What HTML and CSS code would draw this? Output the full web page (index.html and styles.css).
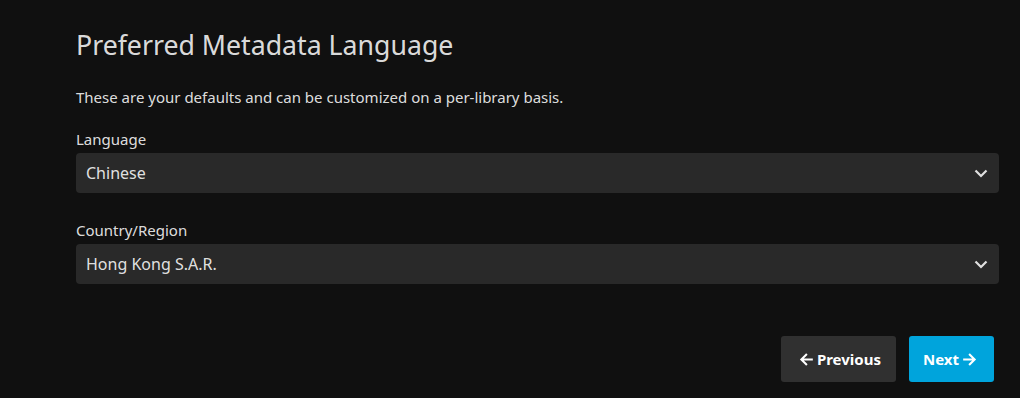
FILE: index.html
```html
<!DOCTYPE html>
<html lang="en">
<head>
  <meta charset="UTF-8">
  <title>Preferred Metadata Language</title>
  <link rel="stylesheet" href="styles.css">
</head>
<body>

<div class="wizard">
  <h1>Preferred Metadata Language</h1>
  <p class="help">These are your defaults and can be customized on a per-library basis.</p>

  <div class="field">
    <label class="field-label">Language</label>
    <div class="select-box">
      <span>Chinese</span>
      <svg class="chevron" width="14" height="9" viewBox="0 0 14 9"><polyline points="1.5,1.5 7,7 12.5,1.5" fill="none" stroke="#e0e0e0" stroke-width="2.2"/></svg>
    </div>
  </div>

  <div class="field">
    <label class="field-label">Country/Region</label>
    <div class="select-box">
      <span>Hong Kong S.A.R.</span>
      <svg class="chevron" width="14" height="9" viewBox="0 0 14 9"><polyline points="1.5,1.5 7,7 12.5,1.5" fill="none" stroke="#e0e0e0" stroke-width="2.2"/></svg>
    </div>
  </div>

  <div class="actions">
    <button class="btn btn-prev">
      <svg class="icon" width="19" height="19" viewBox="0 0 24 24"><path d="M20 12H5.5M12.5 5L5.5 12l7 7" fill="none" stroke="#fff" stroke-width="2.6"/></svg>
      <span>Previous</span>
    </button>
    <button class="btn btn-next">
      <span>Next</span>
      <svg class="icon" width="19" height="19" viewBox="0 0 24 24"><path d="M4 12h14.5M11.5 5l7 7-7 7" fill="none" stroke="#fff" stroke-width="2.6"/></svg>
    </button>
  </div>
</div>

</body>
</html>
```

FILE: styles.css
```css
body {
  margin: 0;
  background-color: #101010;
  color: rgba(255, 255, 255, 0.87);
  font-family: "Noto Sans", sans-serif;
  font-size: 15px;
}
.wizard {
  padding: 27px 21px 0 76px;
}
h1 {
  margin: 0;
  font-size: 26.7px;
  font-weight: 400;
  line-height: 36px;
}
.help {
  margin: 24px 0 0;
  line-height: 21px;
}
.field {
  margin-top: 21px;
}
.field + .field {
  margin-top: 27px;
}
.field-label {
  display: block;
  line-height: 21px;
  margin-bottom: 3px;
}
.select-box {
  height: 40px;
  box-sizing: border-box;
  padding: 0 11px 0 10px;
  background: #292929;
  border-radius: 4px;
  display: flex;
  align-items: center;
  justify-content: space-between;
  font-size: 16px;
}
.actions {
  display: flex;
  justify-content: flex-end;
  gap: 13px;
  margin-top: 52px;
  padding-right: 5px;
}
.btn {
  display: flex;
  align-items: center;
  gap: 1px;
  height: 46px;
  padding: 0 15px;
  border: none;
  border-radius: 3px;
  color: #fff;
  font-family: "Noto Sans", sans-serif;
  font-size: 15px;
  font-weight: 700;
}
.btn-prev {
  background: #303030;
  padding-left: 16px;
}
.btn-next {
  background: #00a4dc;
  padding-left: 14px;
}
```
